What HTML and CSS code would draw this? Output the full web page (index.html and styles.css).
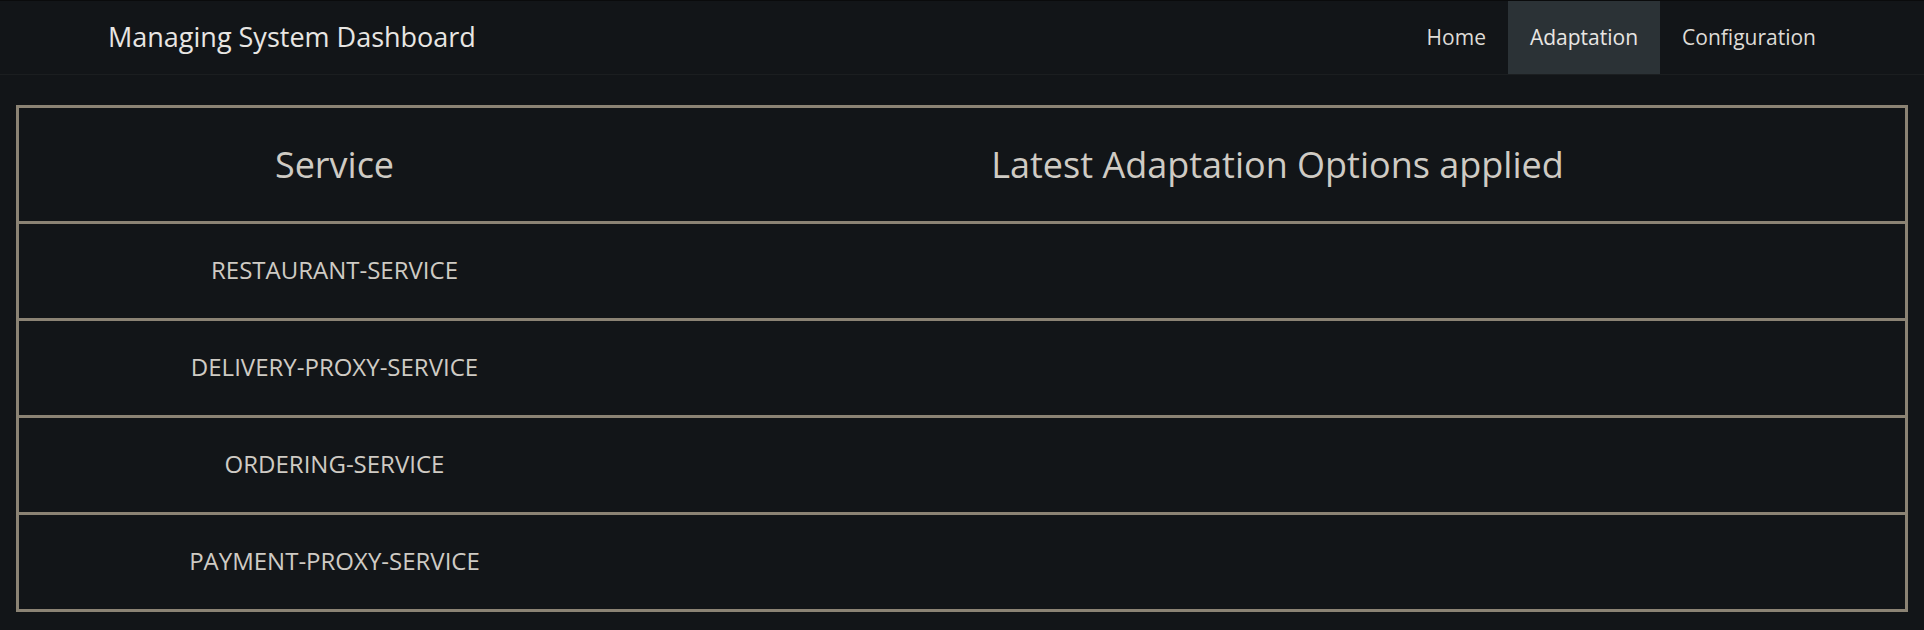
FILE: index.html
```html
<!DOCTYPE html>
<html lang="en">
<head>
<meta charset="utf-8">
<title>Managing System Dashboard</title>
<link rel="stylesheet" href="styles.css">
</head>
<body>
<header class="topbar">
  <div class="brand">Managing System Dashboard</div>
  <nav class="nav">
    <a class="nav-link" href="#">Home</a>
    <a class="nav-link active" href="#">Adaptation</a>
    <a class="nav-link" href="#">Configuration</a>
  </nav>
</header>
<main class="content">
  <table class="services">
    <colgroup>
      <col class="col-service">
      <col class="col-options">
    </colgroup>
    <thead>
      <tr>
        <th>Service</th>
        <th>Latest Adaptation Options applied</th>
      </tr>
    </thead>
    <tbody>
      <tr><td>RESTAURANT-SERVICE</td><td></td></tr>
      <tr><td>DELIVERY-PROXY-SERVICE</td><td></td></tr>
      <tr><td>ORDERING-SERVICE</td><td></td></tr>
      <tr class="last"><td>PAYMENT-PROXY-SERVICE</td><td></td></tr>
    </tbody>
  </table>
</main>
</body>
</html>
```

FILE: styles.css
```css
html, body {
  margin: 0;
  padding: 0;
  background: #121518;
  font-family: "Open Sans", "Noto Sans", sans-serif;
}

.topbar {
  display: flex;
  align-items: stretch;
  justify-content: space-between;
  height: 73px;
  border-top: 1px solid #0a0b0c;
  border-bottom: 1px solid #1b1e20;
  padding: 0 86px 0 108px;
  background: #121518;
}

.brand {
  display: flex;
  align-items: center;
  color: #e8e6e3;
  font-size: 27px;
  padding-bottom: 2px;
}

.nav {
  display: flex;
  align-items: stretch;
}

.nav-link {
  display: flex;
  align-items: center;
  padding: 0 22px 2px 22px;
  color: #dedbd6;
  font-size: 21px;
  text-decoration: none;
}

.nav-link.active {
  background: #2b3236;
  color: #e8e6e3;
}

.content {
  padding: 30px 16px 0 16px;
}

.services {
  width: 100%;
  table-layout: fixed;
  border-collapse: separate;
  border-spacing: 0;
  border: 3px solid #8b8374;
  color: #cfcbc4;
}

.col-service {
  width: 631px;
}

.services th {
  height: 113px;
  padding: 0;
  font-size: 36px;
  font-weight: 400;
  text-align: center;
  border-bottom: 3px solid #8b8374;
}

.services td {
  height: 90px;
  padding: 0 0 4px 0;
  font-size: 24px;
  text-align: center;
  border-bottom: 3px solid #8b8374;
}

.services tr.last td {
  border-bottom: none;
}
```
